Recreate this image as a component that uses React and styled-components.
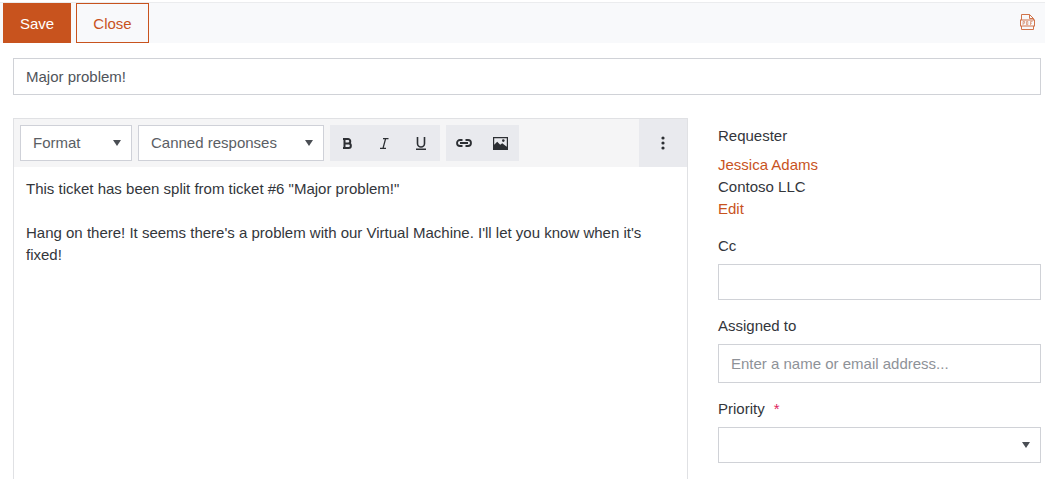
import React from 'react';
import styled, { createGlobalStyle } from 'styled-components';

const Global = createGlobalStyle`
  html, body {
    margin: 0;
    padding: 0;
    background: #fff;
    overflow: hidden;
  }
  body {
    font-family: "Liberation Sans", Arial, sans-serif;
    font-size: 15px;
    color: #33363b;
  }
  * {
    box-sizing: border-box;
  }
`;

const Page = styled.div`
  width: 1045px;
  height: 479px;
  overflow: hidden;
  padding-top: 2px;
`;

const TopBar = styled.div`
  display: flex;
  align-items: stretch;
  justify-content: space-between;
  height: 41px;
  padding-left: 3px;
  background: #f8f9fb;
  border-top: 1px solid #ebecee;
`;

const BarButtons = styled.div`
  display: flex;
  gap: 5px;
`;

const Button = styled.button`
  width: ${p => (p.$primary ? '68px' : '73px')};
  height: 40px;
  padding: 0;
  font: 15px "Liberation Sans", Arial, sans-serif;
  border: 1px solid #c8531e;
  border-radius: 0;
  background: ${p => (p.$primary ? '#c8531e' : 'transparent')};
  color: ${p => (p.$primary ? '#fff' : '#c8531e')};
`;

const PdfIcon = styled.svg`
  width: 15px;
  height: 16px;
  margin: 11px 10px 0 0;
  opacity: 0.8;
`;

const Content = styled.div`
  padding: 15px 4px 0 13px;
`;

const TitleInput = styled.div`
  height: 37px;
  display: flex;
  align-items: center;
  padding: 0 12px;
  color: #50545a;
  border: 1px solid #d0d2d7;
`;

const Columns = styled.div`
  display: flex;
  margin-top: 23px;
`;

const Editor = styled.div`
  width: 675px;
  height: 400px;
  border: 1px solid #e0e1e4;
  flex-shrink: 0;
`;

const Toolbar = styled.div`
  display: flex;
  align-items: flex-start;
  height: 48px;
  padding: 6px 0 0 6px;
  background: #f5f5f6;
`;

const Select = styled.div`
  width: ${p => p.$width}px;
  height: 36px;
  margin-right: 6px;
  padding: 0 10px 2px 12px;
  display: flex;
  align-items: center;
  justify-content: space-between;
  background: #fff;
  border: 1px solid #cfd1d8;
  color: #5a5e64;
  span {
    margin-top: 2px;
  }
`;

const Caret = styled.span`
  width: 0;
  height: 0;
  border-left: 4.5px solid transparent;
  border-right: 4.5px solid transparent;
  border-top: 6px solid #4a4e54;
`;

const ToolGroup = styled.div`
  display: flex;
  height: 36px;
  margin-right: 6px;
  background: #e9eaee;
`;

const ToolButton = styled.div`
  width: 36.6px;
  height: 36px;
  display: flex;
  align-items: center;
  justify-content: center;
  svg {
    display: block;
  }
`;

const MoreButton = styled.div`
  margin-left: auto;
  margin-top: -6px;
  width: 48px;
  height: 48px;
  display: flex;
  align-items: center;
  justify-content: center;
  background: #e9eaee;
`;

const Body = styled.div`
  padding: 11px 12px;
  line-height: 22px;
  p {
    margin: 0 0 22px;
  }
`;

const Side = styled.div`
  flex: 1;
  padding: 7px 0 0 30px;
`;

const Label = styled.div`
  line-height: 22px;
`;

const Requester = styled.div`
  margin-top: 7px;
  line-height: 22px;
`;

const Orange = styled.div`
  color: #c8531e;
`;

const Field = styled.div`
  margin-top: 15px;
`;

const Input = styled.div`
  height: ${p => p.$height || 36}px;
  margin-top: 7px;
  padding: 0 10px 0 12px;
  display: flex;
  align-items: center;
  justify-content: space-between;
  color: #8e9298;
  border: 1px solid #d0d2d7;
`;

const Required = styled.span`
  margin-left: 9px;
  color: #e0245e;
`;

export default function App() {
  return (
    <Page>
      <Global />
      <TopBar>
        <BarButtons>
          <Button $primary>Save</Button>
          <Button>Close</Button>
        </BarButtons>
        <PdfIcon viewBox="0 0 15 16" fill="none" stroke="#c8531e" strokeWidth="1">
          <path d="M1.5 6V.5h8l4 4V6M9.5.5v4h4M1.5 12v3.5h12V12" />
          <rect x="0.5" y="6" width="14" height="6" />
          <path d="M3 11V7.5h1.6V9.2H3M6.5 7.5v3.2h1.3V7.5zM10.5 11V7.5h2M10.5 9.2h1.5" strokeWidth=".6" />
        </PdfIcon>
      </TopBar>
      <Content>
        <TitleInput>Major problem!</TitleInput>
        <Columns>
          <Editor>
            <Toolbar>
              <Select $width={112}>Format<Caret /></Select>
              <Select $width={186}>Canned responses<Caret /></Select>
              <ToolGroup>
                <ToolButton>
                  <svg width="10" height="11" viewBox="0 0 10 11" fill="none" stroke="#2c2f33" strokeWidth="2">
                    <path d="M1.5 0v11M0 1h5a2.2 2.2 0 0 1 0 4.5H1.5M1.5 5.5H5.6a2.25 2.25 0 0 1 0 4.5H0" />
                  </svg>
                </ToolButton>
                <ToolButton>
                  <svg width="9" height="11" viewBox="0 0 9 11" fill="none" stroke="#2c2f33" strokeWidth="1.3">
                    <path d="M3 .7h5.5M0 10.3h6M5.6.7 3 10.3" />
                  </svg>
                </ToolButton>
                <ToolButton>
                  <svg width="10" height="13" viewBox="0 0 10 13" fill="none" stroke="#2c2f33" strokeWidth="1.6">
                    <path d="M1.5 0v6.5a3.5 3.5 0 0 0 7 0V0M0 12.2h10" />
                  </svg>
                </ToolButton>
              </ToolGroup>
              <ToolGroup>
                <ToolButton>
                  <svg width="16" height="8" viewBox="0 0 16 8" fill="none" stroke="#2c2f33" strokeWidth="1.8">
                    <path d="M6.5 1H4a3 3 0 0 0 0 6h2.5M9.5 1H12a3 3 0 0 1 0 6H9.5M4 4h8" />
                  </svg>
                </ToolButton>
                <ToolButton>
                  <svg width="15" height="13" viewBox="0 0 15 13">
                    <path fill="#2c2f33" fillRule="evenodd" d="M0 0h15v13H0zM1.2 1.2v6.6l3-3 3 3 2-1.5 4.6 3.4V1.2z" />
                    <circle cx="10.3" cy="3.6" r="1.3" fill="#2c2f33" />
                  </svg>
                </ToolButton>
              </ToolGroup>
              <MoreButton>
                <svg width="4" height="14" viewBox="0 0 4 14" fill="#2c2f33">
                  <circle cx="2" cy="2" r="1.6" />
                  <circle cx="2" cy="7" r="1.6" />
                  <circle cx="2" cy="12" r="1.6" />
                </svg>
              </MoreButton>
            </Toolbar>
            <Body>
              <p>This ticket has been split from ticket #6 "Major problem!"</p>
              <p>Hang on there! It seems there's a problem with our Virtual Machine. I'll let you know when it's fixed!</p>
            </Body>
          </Editor>
          <Side>
            <Label>Requester</Label>
            <Requester>
              <Orange>Jessica Adams</Orange>
              <div>Contoso LLC</div>
              <Orange>Edit</Orange>
            </Requester>
            <Field>
              <Label>Cc</Label>
              <Input />
            </Field>
            <Field>
              <Label>Assigned to</Label>
              <Input $height={39}>Enter a name or email address...</Input>
            </Field>
            <Field>
              <Label>Priority<Required>*</Required></Label>
              <Input><span /><Caret /></Input>
            </Field>
          </Side>
        </Columns>
      </Content>
    </Page>
  );
}
